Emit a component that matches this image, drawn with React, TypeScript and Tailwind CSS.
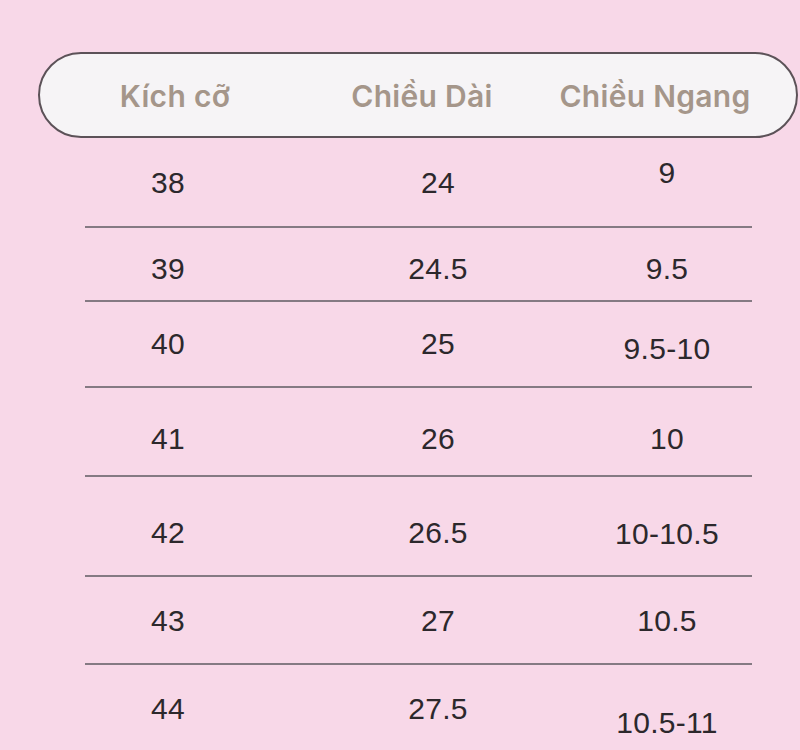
const headers = [
  { label: "Kích cỡ", w: "w-[270px]" },
  { label: "Chiều Dài", w: "w-[224px]" },
  { label: "Chiều Ngang", w: "w-[242px]" },
];

// each row: height (content), text offsets per column, values
const rows = [
  { h: "h-[88px]", vals: ["38", "24", "9"], pt: ["pt-[30px]", "pt-[30px]", "pt-[20px]"] },
  { h: "h-[72px]", vals: ["39", "24.5", "9.5"], pt: ["pt-[26px]", "pt-[26px]", "pt-[26px]"] },
  { h: "h-[84px]", vals: ["40", "25", "9.5-10"], pt: ["pt-[27px]", "pt-[27px]", "pt-[32px]"] },
  { h: "h-[87px]", vals: ["41", "26", "10"], pt: ["pt-[36px]", "pt-[36px]", "pt-[36px]"] },
  { h: "h-[98px]", vals: ["42", "26.5", "10-10.5"], pt: ["pt-[41px]", "pt-[41px]", "pt-[42px]"] },
  { h: "h-[86px]", vals: ["43", "27", "10.5"], pt: ["pt-[29px]", "pt-[29px]", "pt-[29px]"] },
  { h: "h-[85px]", vals: ["44", "27.5", "10.5-11"], pt: ["pt-[29px]", "pt-[29px]", "pt-[43px]"] },
];

const colW = ["w-[166px]", "w-[370px]", "w-[92px]"];
const colShift = ["", "translate-x-[2px]", ""];

export default function App() {
  return (
    <div className="w-[800px] h-[750px] overflow-hidden bg-[#f8d8e8] pt-[52px]">
      {/* header pill */}
      <div className="ml-[38px] w-[760px] h-[86px] rounded-full border-2 border-[#5c5258] bg-[#f6f4f6] flex items-center">
        {headers.map((h) => (
          <div
            key={h.label}
            className={`${h.w} flex justify-center whitespace-nowrap pt-[2px] text-[30px] font-semibold text-[#a5968a] tracking-[0.3px]`}
            style={{ fontFamily: "Inter, 'Noto Sans', sans-serif" }}
          >
            {h.label}
          </div>
        ))}
      </div>

      {/* rows */}
      <div className="ml-[85px] w-[667px]">
        {rows.map((r, i) => (
          <div
            key={r.vals[0]}
            className={`${r.h} flex items-start ${i < rows.length - 1 ? "border-b-2 border-[#857a83] box-content" : ""}`}
          >
            {r.vals.map((v, j) => (
              <div
                key={j}
                className={`${colW[j]} ${r.pt[j]} ${colShift[j]} flex justify-center whitespace-nowrap text-[30px] leading-none text-[#2c282c] tracking-[0.3px]`}
                style={{ fontFamily: "'Liberation Sans', Arial, sans-serif" }}
              >
                {v}
              </div>
            ))}
          </div>
        ))}
      </div>
    </div>
  );
}
